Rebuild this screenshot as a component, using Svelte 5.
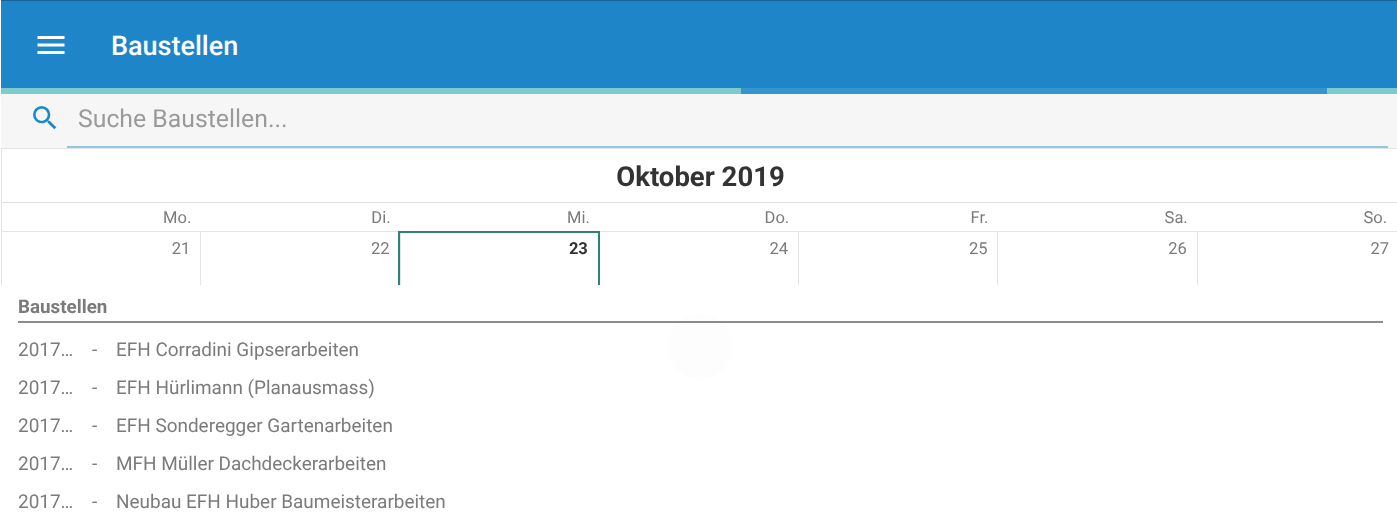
<script>
	const weekdays = ['Mo.', 'Di.', 'Mi.', 'Do.', 'Fr.', 'Sa.', 'So.'];
	const days = [21, 22, 23, 24, 25, 26, 27];
	const today = 23;
	const sites = [
		'EFH Corradini Gipserarbeiten',
		'EFH Hürlimann (Planausmass)',
		'EFH Sonderegger Gartenarbeiten',
		'MFH Müller Dachdeckerarbeiten',
		'Neubau EFH Huber Baumeisterarbeiten'
	];
</script>

<div class="page">
	<header class="appbar">
		<button class="menu" aria-label="Menü">
			<svg width="36" height="36" viewBox="0 0 24 24" fill="#fff"><path d="M3 18h18v-2H3v2zm0-5h18v-2H3v2zm0-7v2h18V6H3z" /></svg>
		</button>
		<h1>Baustellen</h1>
	</header>

	<div class="progress">
		<span class="seg-a"></span>
		<span class="seg-b"></span>
		<span class="seg-c"></span>
	</div>

	<div class="search">
		<svg class="search-icon" width="32" height="32" viewBox="0 0 24 24" fill="#1e88c9"><path d="M15.5 14h-.79l-.28-.27A6.47 6.47 0 0 0 16 9.5 6.5 6.5 0 1 0 9.5 16c1.61 0 3.09-.59 4.23-1.57l.27.28v.79l5 4.99L20.49 19l-4.99-5zm-6 0C7.01 14 5 11.99 5 9.5S7.01 5 9.5 5 14 7.01 14 9.5 11.99 14 9.5 14z" /></svg>
		<div class="field">Suche Baustellen...</div>
	</div>

	<section class="calendar">
		<div class="month">Oktober 2019</div>
		<div class="weekdays">
			{#each weekdays as day}
				<div class="weekday">{day}</div>
			{/each}
		</div>
		<div class="days">
			{#each days as day}
				<div class="day" class:today={day === today}>{day}</div>
			{/each}
		</div>
	</section>

	<section class="list">
		<h2>Baustellen</h2>
		{#each sites as site}
			<div class="row">
				<span class="nr">2017…</span>
				<span class="dash">-</span>
				<span class="name">{site}</span>
			</div>
		{/each}
		<div class="spinner"></div>
	</section>
</div>

<style>
	:global(body) {
		margin: 0;
		background: #fff;
		overflow: hidden;
	}

	.page {
		position: relative;
		height: 523px;
		overflow: hidden;
		padding-left: 1px;
		font-family: Roboto, 'Liberation Sans', sans-serif;
		color: #7b7b7b;
		text-rendering: geometricPrecision;
		will-change: opacity;
	}

	.appbar {
		display: flex;
		align-items: center;
		height: 87px;
		background: #1e86c8;
		border-top: 1px solid #14659b;
	}

	.menu {
		display: flex;
		width: 36px;
		height: 36px;
		margin-left: 32px;
		padding: 0;
		border: 0;
		background: none;
	}

	h1 {
		margin: 0 0 0 42px;
		padding-top: 3px;
		font-size: 27px;
		font-weight: 500;
		color: #fff;
	}

	.progress {
		display: flex;
		height: 6px;
		background: #3a97cf;
	}

	.progress span {
		display: block;
		height: 100%;
	}

	.seg-a {
		width: 740px;
		background: #7fcbcb;
	}

	.seg-b {
		width: 586px;
		background: #3795cd;
	}

	.seg-c {
		flex: 1;
		background: #7fcbcb;
	}

	.search {
		display: flex;
		align-items: stretch;
		height: 54px;
		background: #f6f6f6;
		border-bottom: 1px solid #e4e4e4;
	}

	.search-icon {
		flex: none;
		margin: 8px 0 0 28px;
	}

	.field {
		flex: 1;
		height: 54px;
		margin: 0 9px 0 6px;
		padding: 12px 0 0 11px;
		box-sizing: border-box;
		border-bottom: 2px solid #94c6e2;
		font-size: 24.8px;
		line-height: 28px;
		color: #9a9a9a;
	}

	.calendar {
		border-left: 1px solid #e4e4e4;
	}

	.month {
		height: 54px;
		border-bottom: 1px solid #dedede;
		box-sizing: border-box;
		padding: 11px 0 0 2px;
		font-size: 27.5px;
		line-height: 34px;
		font-weight: 700;
		text-align: center;
		color: #333;
	}

	.weekdays,
	.days {
		display: grid;
		grid-template-columns: repeat(7, 1fr);
	}

	.weekdays {
		height: 29px;
		box-sizing: border-box;
		border-bottom: 1px solid #e4e4e4;
	}

	.weekday {
		padding: 6px 10px 0 0;
		font-size: 16.5px;
		line-height: 20px;
		text-align: right;
	}

	.days {
		height: 53px;
	}

	.day {
		padding: 8px 10px 0 0;
		border-right: 1px solid #e4e4e4;
		font-size: 16.5px;
		line-height: 20px;
		text-align: right;
	}

	.day:last-child {
		padding-right: 8px;
		border-right: 0;
	}

	.day.today {
		margin: -1px 0 0 -3px;
		padding: 7px 10px 0 0;
		border: 2px solid #2a8578;
		border-bottom: 0;
		font-weight: 700;
		color: #333;
	}

	.list {
		position: relative;
		padding: 11px 14px 0 17px;
	}

	h2 {
		margin: 0 0 8px;
		padding-bottom: 3px;
		border-bottom: 2px solid #8c8c8c;
		font-size: 18.8px;
		line-height: 22px;
		font-weight: 700;
		color: #7b7b7b;
	}

	.row {
		display: flex;
		height: 38px;
		font-size: 18.95px;
		line-height: 38px;
		white-space: nowrap;
	}

	.nr {
		width: 74px;
	}

	.dash {
		width: 24px;
	}

	.spinner {
		position: absolute;
		left: 666px;
		top: 29px;
		width: 66px;
		height: 66px;
		border-radius: 50%;
		background: rgba(0, 0, 0, 0.008);
	}
</style>
